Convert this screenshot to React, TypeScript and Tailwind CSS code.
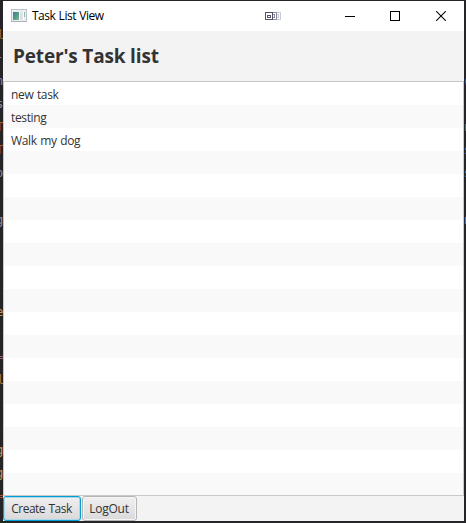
import React from "react";

const TASKS = ["new task", "testing", "Walk my dog"];
const ROW_COUNT = 18;

type Mark = { top: number; char: string; left: number; color: string };

// Slivers of the code editor that show beside the window.
const LEFT_MARKS: Mark[] = [
  { top: 27, char: "l", left: -3, color: "#9a6527" },
  { top: 49, char: "-", left: -4, color: "#777b80" },
  { top: 73, char: "n", left: -4, color: "#7890ad" },
  { top: 96, char: "s", left: -4, color: "#8b929a" },
  { top: 119, char: "T", left: -4, color: "#a85c2c" },
  { top: 142, char: "T", left: -4, color: "#a85c2c" },
  { top: 165, char: "o", left: -4, color: "#8294ad" },
  { top: 212, char: "g", left: -4, color: "#8b929a" },
  { top: 304, char: "e", left: -4, color: "#c59a50" },
  { top: 349, char: "=", left: -4, color: "#92608f" },
  { top: 372, char: "l", left: -3, color: "#a87935" },
  { top: 442, char: "g", left: -4, color: "#c59a50" },
  { top: 465, char: "g", left: -4, color: "#c59a50" },
  { top: 488, char: "=", left: -4, color: "#a85c2c" },
];

const RIGHT_MARKS: Mark[] = [
  { top: 74, char: "(", left: -1, color: "#6489b8" },
  { top: 119, char: "n", left: 0, color: "#756e66" },
  { top: 142, char: "s", left: 0, color: "#6489b8" },
  { top: 165, char: "s", left: 0, color: "#7890ad" },
  { top: 212, char: "n", left: 0, color: "#6489b8" },
];

function Sliver({ marks }: { marks: Mark[] }) {
  return (
    <div className="relative h-full overflow-hidden bg-[#252528] font-['DejaVu_Sans_Mono',monospace] text-[12px] leading-[16px]">
      {marks.map((m) => (
        <span key={m.top} className="absolute" style={{ top: m.top, left: m.left, color: m.color }}>
          {m.char}
        </span>
      ))}
    </div>
  );
}

function AppIcon() {
  return (
    <svg className="mr-[5px] h-[14px] w-[16px]" viewBox="0 0 16 14" shapeRendering="crispEdges">
      <defs>
        <linearGradient id="pane" x1="0" y1="0" x2="1" y2="1">
          <stop offset="0" stopColor="#4a74a6" />
          <stop offset="0.5" stopColor="#4f9a88" />
          <stop offset="1" stopColor="#7fba96" />
        </linearGradient>
      </defs>
      <rect x="0.5" y="0.5" width="15" height="12" fill="#eceef0" stroke="#bbc1c8" />
      <rect x="0" y="12" width="16" height="1" fill="#a9b0b6" />
      <rect x="2" y="3" width="6" height="8" fill="url(#pane)" />
      <rect x="8" y="3" width="1" height="8" fill="#fff" />
      <rect x="9" y="3" width="3" height="8" fill="#dde0e4" />
      <rect x="12" y="3" width="1" height="8" fill="#fff" />
      <rect x="13" y="3" width="1" height="5" fill="#8fbcae" />
    </svg>
  );
}

function RecorderIcon() {
  return (
    <svg className="h-[8px] w-[16px]" viewBox="0 0 16 8" fill="none" shapeRendering="crispEdges">
      <path d="M12 .5h3.5v7H12M12 2.5h1.5v3H12" stroke="#c8c9d2" />
      <path d="M8 .5h3.5v7H8M8 2.5h1.5v3H8" stroke="#8d8fa0" />
      <rect x="0.5" y="0.5" width="7" height="7" stroke="#505468" />
      <rect x="2.5" y="3.5" width="3" height="2" stroke="#505468" />
    </svg>
  );
}

function TitleBar() {
  return (
    <header className="flex h-[30px] shrink-0 items-center bg-white pl-2">
      <AppIcon />
      <span className="w-[233px] whitespace-nowrap font-['Open_Sans',sans-serif] text-[12px] tracking-[-0.5px] [word-spacing:0.7px] text-black">
        Task List View
      </span>
      <RecorderIcon />
      <svg className="ml-[64px] h-[10px] w-[102px]" viewBox="0 0 102 10" fill="none" stroke="#000">
        <path d="M0 5.5h10" shapeRendering="crispEdges" />
        <rect x="45.5" y="0.5" width="9" height="9" shapeRendering="crispEdges" />
        <path d="M91.2.2l9.6 9.6M100.8.2l-9.6 9.6" strokeWidth="1.1" />
      </svg>
    </header>
  );
}

export default function App() {
  return (
    <div className="grid h-[523px] w-[466px] grid-cols-[3px_461px_2px] overflow-hidden bg-[#252528]">
      <Sliver marks={LEFT_MARKS} />
      <main className="my-px flex h-[520px] flex-col bg-[#f3f3f3] font-['Open_Sans',sans-serif] text-[12px] text-[#333]">
        <TitleBar />
        <div className="flex h-[50px] shrink-0 items-center pl-[10px]">
          <h1 className="whitespace-nowrap text-[19px] font-bold leading-none tracking-[-0.17px]">Peter's Task list</h1>
        </div>
        <ul className="h-[415px] shrink-0 overflow-hidden border border-[#c8c8c8]">
          {Array.from({ length: ROW_COUNT }, (_, i) => (
            <li
              key={i}
              className="flex h-[23px] items-center bg-white pl-[7px] pt-[2px] tracking-[-0.35px] [word-spacing:0.8px] even:bg-[#f9f9f9]"
            >
              {TASKS[i]}
            </li>
          ))}
        </ul>
        <footer className="flex h-[25px] shrink-0">
          <button className="w-[78px] whitespace-nowrap rounded-[3px] border border-[#039ed3] bg-linear-to-b from-[#f0f0f0] to-[#d9d9d9] pr-px pt-px tracking-[-0.5px] [word-spacing:0.8px] shadow-[inset_0_0_0_1px_#a9d8ea]">
            Create Task
          </button>
          <button className="ml-px w-[55px] whitespace-nowrap rounded-[3px] border border-[#b5b5b5] bg-linear-to-b from-[#f0f0f0] to-[#dadada] pr-px pt-px tracking-[-0.25px] shadow-[inset_0_0_0_1px_#f5f5f5]">
            LogOut
          </button>
        </footer>
      </main>
      <Sliver marks={RIGHT_MARKS} />
    </div>
  );
}
